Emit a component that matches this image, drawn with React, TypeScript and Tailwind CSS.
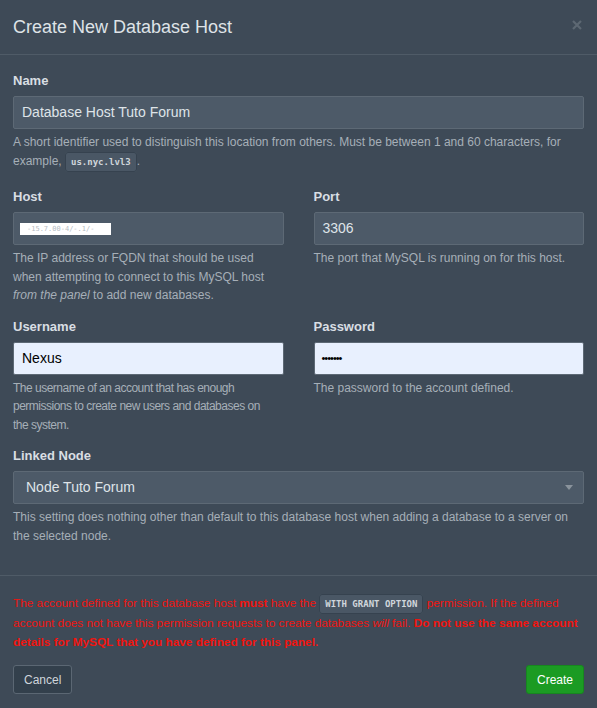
import React from 'react';

// Small inline code chip used in help text
const Code = ({ children }: { children: React.ReactNode }) => (
  <code className="rounded-[3px] border border-[#36424f] bg-[#4a5765] px-[5px] py-[4px] font-['DejaVu_Sans_Mono',monospace] text-[9px] font-bold text-[#d0d6dc]">
    {children}
  </code>
);

const Label = ({ children }: { children: React.ReactNode }) => (
  <label className="mb-[6px] block text-[13px] font-bold leading-[18px] text-[#d9dee3]">{children}</label>
);

const Help = ({ children, tight = false }: { children: React.ReactNode; tight?: boolean }) => (
  <p className={tight ? 'mt-[4px] text-[12px] leading-[18.5px] tracking-[-0.5px] text-[#a6afb8]' : 'mt-[4px] text-[12px] leading-[18.5px] text-[#a6afb8]'}>
    {children}
  </p>
);

const Input = ({ value, light = false }: { value: string; light?: boolean }) => (
  <div
    className={
      light
        ? 'flex h-[33px] items-center rounded-[2px] border border-[#5d6975] bg-[#e8f0fe] px-[8px] text-[14px] text-black'
        : 'flex h-[33px] items-center rounded-[2px] border border-[#5d6975] bg-[#4d5a68] px-[8px] text-[14px] text-[#dfe4e8]'
    }
  >
    {value}
  </div>
);

const App: React.FC = () => {
  return (
    <div className="h-[708px] w-[597px] overflow-hidden bg-[#3e4a57] font-['Liberation_Sans',Arial,sans-serif]">
      {/* Header */}
      <div className="flex h-[55px] items-center justify-between border-b border-[#4f5b67] pl-[13px] pr-[15px]">
        <h4 className="text-[18px] text-[#dfe3e7]">Create New Database Host</h4>
        <svg width="10" height="10" viewBox="0 0 10 10" className="mb-[4px]">
          <path d="M1 1L9 9M9 1L1 9" stroke="#5d6873" strokeWidth="2.2" />
        </svg>
      </div>

      {/* Body */}
      <div className="px-[13px] pt-[17px] pb-[30px]">
        <div>
          <Label>Name</Label>
          <Input value="Database Host Tuto Forum" />
          <Help>
            A short identifier used to distinguish this location from others. Must be between 1 and 60 characters, for
            example, <Code>us.nyc.lvl3</Code>.
          </Help>
        </div>

        <div className="mt-[17px] grid grid-cols-2 gap-x-[30px]">
          <div>
            <Label>Host</Label>
            <div className="flex h-[33px] items-center rounded-[2px] border border-[#5d6975] bg-[#4d5a68] px-[6px]">
              <div className="flex h-[12px] w-[91px] items-center overflow-hidden whitespace-nowrap bg-white px-[7px] font-['DejaVu_Sans_Mono',monospace] text-[7px] leading-[8px] text-[#b6bcc3]">
                -15.7.00-4/-.1/-
              </div>
            </div>
            <Help>
              The IP address or FQDN that should be used when attempting to connect to this MySQL host{' '}
              <em>from the panel</em> to add new databases.
            </Help>
          </div>
          <div>
            <Label>Port</Label>
            <Input value="3306" />
            <Help>The port that MySQL is running on for this host.</Help>
          </div>
        </div>

        <div className="mt-[13px] grid grid-cols-2 gap-x-[30px]">
          <div>
            <Label>Username</Label>
            <Input value="Nexus" light />
            <Help tight>
              The username of an account that has enough permissions to create new users and databases on
              <br />
              the system.
            </Help>
          </div>
          <div>
            <Label>Password</Label>
            <div className="flex h-[33px] items-center rounded-[2px] border border-[#5d6975] bg-[#e8f0fe] px-[7px] text-[11px] tracking-[-1px] text-black">
              •••••••
            </div>
            <Help>The password to the account defined.</Help>
          </div>
        </div>

        <div className="mt-[13px]">
          <Label>Linked Node</Label>
          <div className="flex h-[33px] items-center justify-between rounded-[2px] border border-[#5d6975] bg-[#4d5a68] pl-[12px] pr-[10px] text-[14px] text-[#dfe4e8]">
            <span>Node Tuto Forum</span>
            <svg width="8" height="5" viewBox="0 0 8 5">
              <path d="M0 0H8L4 5Z" fill="#8a939c" />
            </svg>
          </div>
          <Help>This setting does nothing other than default to this database host when adding a database to a server on the selected node.</Help>
        </div>
      </div>

      {/* Footer */}
      <div className="border-t border-[#4f5b67] px-[13px] pt-[18px]">
        <p className="text-[11.8px] leading-[19px] text-[#f0140f]">
          The account defined for this database host <strong>must</strong> have the <Code>WITH GRANT OPTION</Code>{' '}
          permission. If the defined account does not have this permission requests to create databases <em>will</em>{' '}
          fail. <strong>Do not use the same account details for MySQL that you have defined for this panel.</strong>
        </p>
        <div className="mt-[13px] flex items-center justify-between">
          <button className="h-[29px] rounded-[3px] border border-[#5b6773] bg-[#33404c] px-[10px] text-[12px] text-[#cfd5db]">
            Cancel
          </button>
          <button className="h-[29px] rounded-[3px] border border-[#17861f] bg-[#1b9b23] px-[10px] text-[12px] text-white">
            Create
          </button>
        </div>
      </div>
    </div>
  );
};

export default App;
